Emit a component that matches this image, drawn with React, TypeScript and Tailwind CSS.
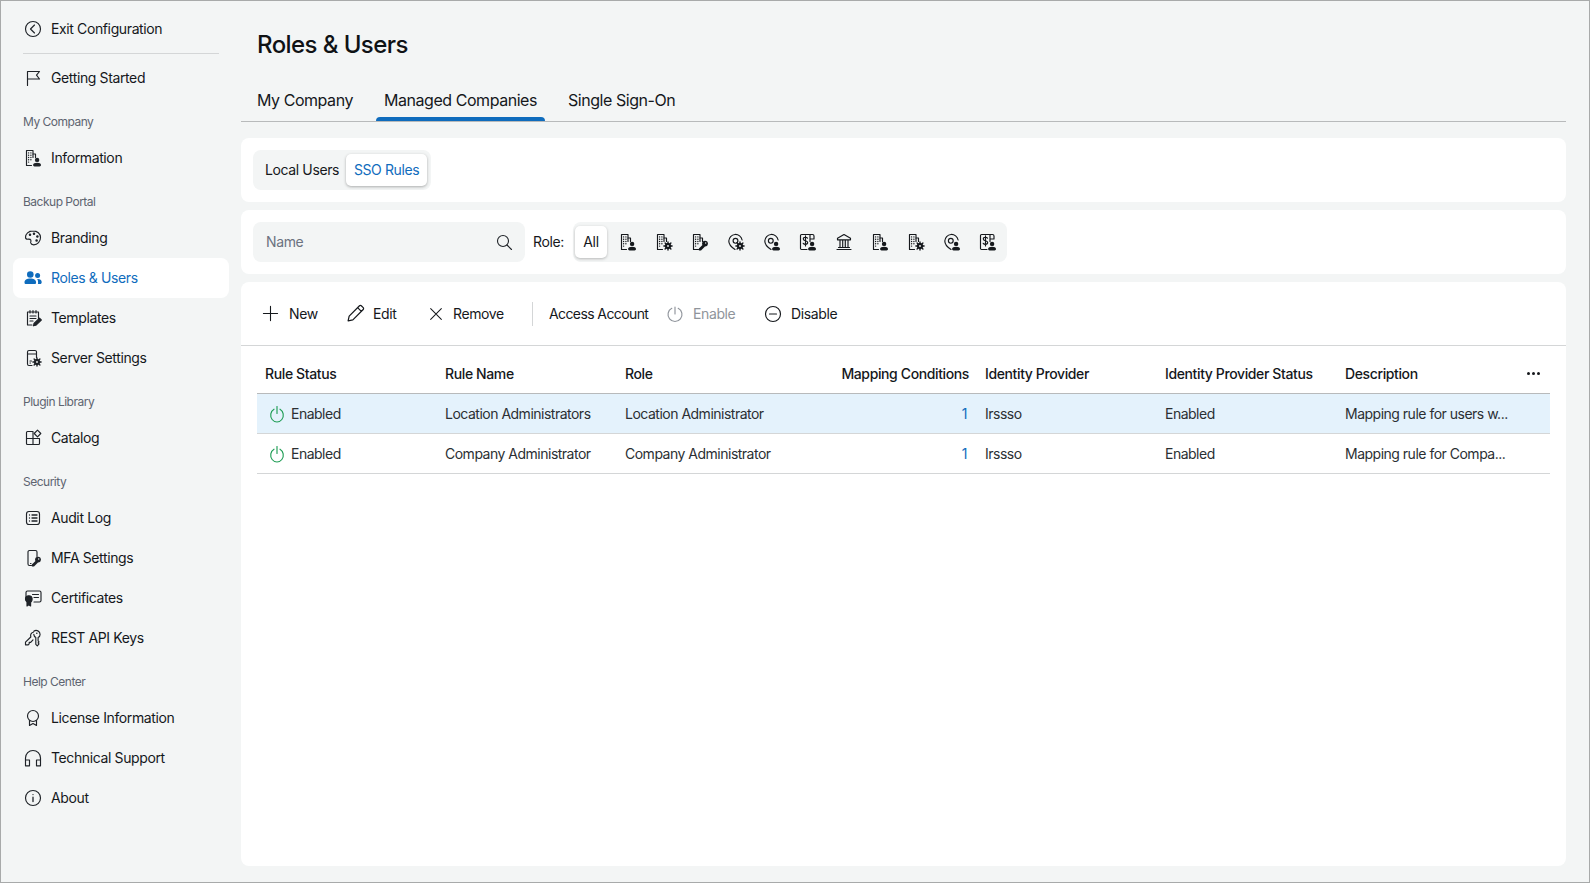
import React from "react";

const S = ({ children, size = 18, cls = "" }: { children: React.ReactNode; size?: number; cls?: string }) => (
  <svg width={size} height={size} viewBox="0 0 18 18" fill="none" stroke="currentColor" strokeWidth={1.15} strokeLinecap="round" strokeLinejoin="round" className={"shrink-0 " + cls}>
    {children}
  </svg>
);

const Person = () => (
  <g fill="currentColor" stroke="none">
    <circle cx="13.100" cy="10.900" r="2.200" />
    <path d="M9.100 16c0-1.500 1.700-2.200 4-2.200s3.900.7 3.900 2.200c0 .9-.6 1.400-1.400 1.400h-5.100c-.8 0-1.400-.5-1.400-1.400z" />
  </g>
);
const Gear = () => (
  <g>
    <circle cx="13" cy="13" r="2.700" fill="currentColor" stroke="currentColor" strokeWidth="1" />
    <path d="M13 8.900v1.300M13 15.800v1.300M8.900 13h1.300M15.800 13h1.300M10.100 10.100l.9.9M15 15l.9.9M10.100 15.900l.9-.9M15 11l.9-.9" strokeWidth="1.400" />
    <circle cx="13" cy="13" r=".9" fill="#f3f5f5" stroke="none" />
  </g>
);
const Key = () => (
  <g fill="currentColor" stroke="none">
    <circle cx="14" cy="10.600" r="2.900" />
    <path d="M12 11.500l2 2-4 4.100H7.900v-2z" />
    <circle cx="14.700" cy="10" r=".7" fill="#f3f5f5" />
  </g>
);
const Bld = () => (
  <g>
    <path d="M7.500 16.500H2.500V1.500h6.500v7" />
    <path d="M9 5h2.500v3.500" />
    <path d="M4.600 3.900h.01M6.900 3.900h.01M4.600 6.200h.01M6.900 6.200h.01M4.600 8.500h.01M6.900 8.500h.01M4.600 10.800h.01M6.900 10.800h.01M4.600 13.100h.01" strokeWidth="1.400" />
  </g>
);
const BldPerson = () => <S><Bld /><Person /></S>;
const BldGear = () => <S><Bld /><Gear /></S>;
const BldKey = () => <S><Bld /><Key /></S>;
const Pin = () => <path d="M8 16.500C4.800 14.500 1.800 12 1.800 8a6.700 6.700 0 0 1 13.300-1" />;
const PinGear = () => (
  <S><Pin /><circle cx="8.500" cy="7.800" r="2.400" /><Gear /></S>
);
const PinPerson = () => (
  <S><Pin /><circle cx="7.800" cy="7.800" r="2.400" /><Person /></S>
);
const Bill = () => (
  <S>
    <path d="M8 16.500H2.500a1 1 0 0 1-1-1V2.500a1 1 0 0 1 1-1H10.500" />
    <path d="M11 1.500h2.500a1.500 1.500 0 0 1 1.500 1.500v3h-4zM11 6v2.500" />
    <path d="M8.500 5.200C8 4.500 7.200 4.200 6.300 4.200 5.200 4.200 4.300 4.900 4.300 6c0 2.400 4.400 1.200 4.400 3.600 0 1.100-1 1.700-2.200 1.700-1 0-1.800-.3-2.300-1M6.500 2.900v10" />
    <Person />
  </S>
);
const Bank = () => (
  <S>
    <path d="M9 1.500 2.500 5.300v1.500h13V5.300zM3.500 14.500h11M2 16.500h14M5 7v7.500M7.700 7v7.500M10.300 7v7.500M13 7v7.500" />
  </S>
);

const Exit = () => <S><circle cx="9" cy="9" r="7.500" /><path d="M10.500 5 6.500 9l4 4" /></S>;
const Flag = () => <S><path d="M3.500 16.500v-14M3.500 2.500h12l-3 3.700 3 3.800h-12" /></S>;
const Palette = () => (
  <S>
    <path d="M9 1.800C4.500 1.800 1.500 5 1.500 8.200c0 1.600 1.200 2 2.300 2 1.300 0 2.700-.2 3.100 1 .4 1-.4 1.700-.2 2.700.3 1.200 1.400 1.900 3 1.900 3.900 0 6.800-3.200 6.800-7.200 0-3.900-3.200-6.800-7.500-6.800z" />
    <circle cx="6" cy="5.800" r=".7" fill="currentColor" /><circle cx="10" cy="4.800" r=".7" fill="currentColor" /><circle cx="13.400" cy="7.500" r=".7" fill="currentColor" /><circle cx="12.600" cy="11.400" r=".7" fill="currentColor" />
  </S>
);
const Users = () => (
  <svg width="18" height="18" viewBox="0 0 18 18" fill="currentColor" className="shrink-0">
    <circle cx="6.300" cy="5.500" r="3.300" />
    <path d="M.5 13.400c0-2.500 2.500-3.800 5.800-3.800s5.800 1.300 5.800 3.800c0 1-.6 1.700-1.600 1.700H2.100c-1 0-1.600-.7-1.600-1.700z" />
    <circle cx="13.600" cy="6.600" r="2.500" />
    <path d="M13.200 10c2.500-.2 4.500.8 4.500 2.900 0 1.300-.6 2.200-1.600 2.200h-2.300c.2-.5.3-1 .3-1.700 0-1.300-.3-2.400-.9-3.400z" />
  </svg>
);
const Tpl = () => (
  <S>
    <path d="M8 16H3.500V3h11v6.500M6 1.500V4M9 1.500V4M12 1.500V4M6 7h6M6 9.500h6M6 12h3" />
    <path d="M9.500 16.800l.5-2.300 5.500-5.300 1.800 1.800-5.500 5.300z" fill="currentColor" />
  </S>
);
const Server = () => (
  <S>
    <path d="M8 16.500H5a1.500 1.500 0 0 1-1.500-1.500V3A1.500 1.500 0 0 1 5 1.500h6A1.500 1.500 0 0 1 12.500 3v5.500M3.500 5h9M6 12h1.500M6 14h.5" />
    <Gear />
  </S>
);
const Catalog = () => (
  <S>
    <path d="M8.500 2.500H3.500a1 1 0 0 0-1 1v11a1 1 0 0 0 1 1h11a1 1 0 0 0 1-1V9.500H2.500M9 9.500v6M9 2.500v7" />
    <path d="M13.500 1.200 16.800 4.500 13.500 7.800 10.200 4.500z" />
  </S>
);
const Audit = () => (
  <S>
    <rect x="2.500" y="2.500" width="13" height="13" rx="2.500" />
    <path d="M8 6h5M8 9h5M8 12h5M5.500 6h.01M5.500 9h.01M5.500 12h.01" strokeWidth="1.300" />
  </S>
);
const Mfa = () => (
  <S>
    <path d="M7.500 16.500H5.500a1.500 1.500 0 0 1-1.500-1.500V3a1.500 1.500 0 0 1 1.500-1.500h6A1.500 1.500 0 0 1 13 3v4.500M6.500 14.500h.5" />
    <Key />
  </S>
);
const Cert = () => (
  <S>
    <path d="M2 10V3.500A1.500 1.500 0 0 1 3.500 2h12A1.500 1.500 0 0 1 17 3.500v8a1.500 1.500 0 0 1-1.500 1.500H10M8.500 5.500h6M10 8.500h4.500" />
    <circle cx="4.800" cy="10" r="3.300" fill="currentColor" />
    <path d="M3 13v4l1.800-1.200L6.600 17v-4" fill="currentColor" />
  </S>
);
const Keys = () => (
  <S>
    <path d="M9.800 2.300a3.900 3.900 0 0 1 6.300 3.100c0 1.400-.9 2.500-2 3.100v3.400l.9.900-.9 1 .9 1-1.700 2-1.500-1.500V8.500a3.800 3.800 0 0 1-2-3.100" />
    <path d="M9.300 3.300C7.300 3.900 6.300 6 6.800 8L1.500 13.200v2.600h2.700l1-1v-1.500h1.500l2.300-2.500" />
    <path d="M12.800 4.300h.01" strokeWidth="1.600" />
  </S>
);
const Lic = () => (
  <S>
    <circle cx="9" cy="7" r="5.500" />
    <path d="M5.500 11.500V16.500L9 14.500l3.500 2V11.500" />
  </S>
);
const Head = () => (
  <S>
    <path d="M1.500 11V9a7.500 7.500 0 0 1 15 0v2" />
    <rect x="1.500" y="11" width="4" height="5.800" />
    <rect x="12.500" y="11" width="4" height="5.800" />
  </S>
);
const About = () => <S><circle cx="9" cy="9" r="7.500" /><path d="M9 8.200v4.300M9 5.600h.01" strokeWidth="1.300" /></S>;
const Power = () => <S><path d="M9 1.500v7" /><path d="M6 4.200a6.300 6.800 0 1 0 6 0" /></S>;

const Item = ({ icon, label, active }: { icon: React.ReactNode; label: string; active?: boolean }) => (
  <div className={"mx-[12px] flex h-10 items-center gap-[9px] rounded-lg pl-[11px] text-[14px] " + (active ? "bg-white text-[#0f6cbd]" : "text-[#15181c]")}>
    <span className={"flex w-[18px] justify-center " + (active ? "text-[#0f6cbd]" : "text-[#1f2328]")}>{icon}</span>
    <span className="pb-[2px]">{label}</span>
  </div>
);
const Section = ({ label }: { label: string }) => (
  <div className="flex h-10 items-end pb-[8px] pl-[22px] text-[12px] leading-4 tracking-[-0.5px] text-[#5d6470]">{label}</div>
);

const COLS = "grid grid-cols-[180px_180px_200px_160px_180px_180px_1fr]";

const rows = [
  ["Location Administrators", "Location Administrator", "Mapping rule for users w..."],
  ["Company Administrator", "Company Administrator", "Mapping rule for Compa..."],
];

const ToolBtn = ({ icon, label, disabled, cls }: { icon: React.ReactNode; label: string; disabled?: boolean; cls: string }) => (
  <div className={"flex items-center " + cls + (disabled ? " text-[#8f949b]" : " text-[#15181c]")}>
    {icon}
    <span>{label}</span>
  </div>
);

export default function App() {
  return (
    <div className="flex h-[883px] w-[1590px] overflow-hidden border border-[#a8aaaa] bg-[#f3f5f5] font-['Inter',sans-serif] text-[14px] tracking-[-0.38px] text-[#15181c]">
      <aside className="flex w-[240px] shrink-0 flex-col pt-[8px]">
        <Item icon={<Exit />} label="Exit Configuration" />
        <div className="my-[4px] ml-[22px] h-px w-[196px] bg-[#d4d6d7]" />
        <Item icon={<Flag />} label="Getting Started" />
        <Section label="My Company" />
        <Item icon={<BldPerson />} label="Information" />
        <Section label="Backup Portal" />
        <Item icon={<Palette />} label="Branding" />
        <Item icon={<Users />} label="Roles & Users" active />
        <Item icon={<Tpl />} label="Templates" />
        <Item icon={<Server />} label="Server Settings" />
        <Section label="Plugin Library" />
        <Item icon={<Catalog />} label="Catalog" />
        <Section label="Security" />
        <Item icon={<Audit />} label="Audit Log" />
        <Item icon={<Mfa />} label="MFA Settings" />
        <Item icon={<Cert />} label="Certificates" />
        <Item icon={<Keys />} label="REST API Keys" />
        <Section label="Help Center" />
        <Item icon={<Lic />} label="License Information" />
        <Item icon={<Head />} label="Technical Support" />
        <Item icon={<About />} label="About" />
      </aside>

      <main className="flex w-[1325px] shrink-0 flex-col">
        <h1 className="pl-[16px] pt-[29px] text-[24px] font-medium leading-[30px] tracking-[-0.58px] text-[#0f1215]">Roles &amp; Users</h1>
        <div className="mt-[17px] flex h-[45px] items-stretch border-b border-[#b8babb] pl-[8px] pt-[1px] text-[16px] tracking-[-0.45px]">
          <div className="flex items-center px-[8px]">My Company</div>
          <div className="relative ml-[15px] flex items-center px-[8px]">
            Managed Companies
            <span className="absolute inset-x-0 bottom-0 h-[4px] rounded-t bg-[#0f6cbd]" />
          </div>
          <div className="ml-[15px] flex items-center px-[8px]">Single Sign-On</div>
        </div>

        <section className="mt-[16px] flex h-[64px] items-center rounded-lg bg-white pl-[12px]">
          <div className="flex h-10 items-center rounded-lg bg-[#f3f5f5] p-[4px] pl-[12px]">
            <span className="mr-[7px] pb-[2px]">Local Users</span>
            <span className="flex h-8 w-[81px] items-center justify-center rounded-[5px] bg-white pb-[2px] text-[#0f6cbd] shadow-[0_1px_3px_rgba(0,0,0,0.3)]">SSO Rules</span>
          </div>
        </section>

        <section className="mt-[8px] flex h-[64px] items-center rounded-lg bg-white pl-[12px]">
          <div className="flex h-10 w-[272px] items-center justify-between rounded-lg bg-[#f3f5f5] pl-[13px] pr-[12px] text-[#6b7280]">
            <span className="pb-[1px]">Name</span>
            <svg width="18" height="18" viewBox="0 0 18 18" fill="none" stroke="#1f2328" strokeWidth="1.100" strokeLinecap="round"><circle cx="8" cy="8" r="5.500" /><path d="M12 12l4.500 4.500" /></svg>
          </div>
          <span className="ml-[8px] w-[40px] pb-[1px]">Role:</span>
          <div className="flex h-10 items-center rounded-lg bg-[#f3f5f5] py-[4px] px-[2px]">
            <span className="mr-[2px] flex h-8 w-[32px] items-center justify-center rounded-[5px] bg-white pb-[1px] shadow-[0_1px_3px_rgba(0,0,0,0.25)]">All</span>
            {[<BldPerson />, <BldGear />, <BldKey />, <PinGear />, <PinPerson />, <Bill />, <Bank />, <BldPerson />, <BldGear />, <PinPerson />, <Bill />].map((ic, i) => (
              <span key={i} className="flex h-8 w-[36px] items-center justify-center pl-[2px] text-[#15181c]">{ic}</span>
            ))}
          </div>
        </section>

        <section className="mt-[8px] flex-1 rounded-lg bg-white">
          <div className="flex h-[64px] items-center border-b border-[#d4d6d7] pl-[21px]">
            <ToolBtn cls="w-[84px] gap-[10px]" icon={<S size={17}><path d="M9 1.500v15M1.500 9h15" /></S>} label="New" />
            <ToolBtn cls="w-[82px] gap-[8px]" icon={<S size={19}><path d="M2 16l1-4.500L12.800 1.700a1.200 1.200 0 0 1 1.700 0l1.800 1.800a1.200 1.200 0 0 1 0 1.700L6.500 15zM11 3.500l3.500 3.500" /></S>} label="Edit" />
            <ToolBtn cls="w-[104px] gap-[9px]" icon={<S size={16}><path d="M3 3l12 12M15 3L3 15" /></S>} label="Remove" />
            <div className="h-[24px] w-px bg-[#d4d6d7]" />
            <span className="ml-[16px] w-[117px] tracking-[-0.6px]">Access Account</span>
            <ToolBtn disabled cls="w-[98px] gap-[9px]" icon={<S><path d="M9 2v7" /><path d="M5.800 3.300a7 7 0 1 0 6.400 0" /></S>} label="Enable" />
            <ToolBtn cls="gap-[9px]" icon={<S><circle cx="9" cy="9" r="7.500" /><path d="M5.500 9h7" /></S>} label="Disable" />
          </div>

          <div className="mx-[16px] w-[1293px]">
            <div className={COLS + " relative h-[48px] items-center border-b border-[#b8babb] pt-[8px] font-medium"}>
              {["Rule Status", "Rule Name", "Role", "Mapping Conditions", "Identity Provider", "Identity Provider Status", "Description"].map((h, i) => (
                <div key={h} className={i === 3 ? "whitespace-nowrap pr-[8px] text-right" : "pl-[8px]"}>{h}</div>
              ))}
              <div className="absolute right-[10px] top-[26px] flex gap-[2px]">
                <span className="h-[3px] w-[3px] rounded-full bg-[#15181c]" /><span className="h-[3px] w-[3px] rounded-full bg-[#15181c]" /><span className="h-[3px] w-[3px] rounded-full bg-[#15181c]" />
              </div>
            </div>
            {rows.map((r, i) => (
              <div key={i} className={COLS + " h-10 items-center border-b border-[#d4d6d7] tracking-[-0.5px] text-[#2b2f33] " + (i === 0 ? "bg-[#e4f2fc]" : "")}>
                <div className="flex items-center gap-[5px] pl-[11px]"><span className="text-[#1f9d55]"><Power /></span>Enabled</div>
                <div className="pl-[8px]">{r[0]}</div>
                <div className="pl-[8px]">{r[1]}</div>
                <div className="pr-[10px] text-right text-[#0f6cbd]">1</div>
                <div className="pl-[8px]">Irssso</div>
                <div className="pl-[8px]">Enabled</div>
                <div className="pl-[8px]">{r[2]}</div>
              </div>
            ))}
          </div>
        </section>
        <div className="h-[16px] shrink-0" />
      </main>
    </div>
  );
}
